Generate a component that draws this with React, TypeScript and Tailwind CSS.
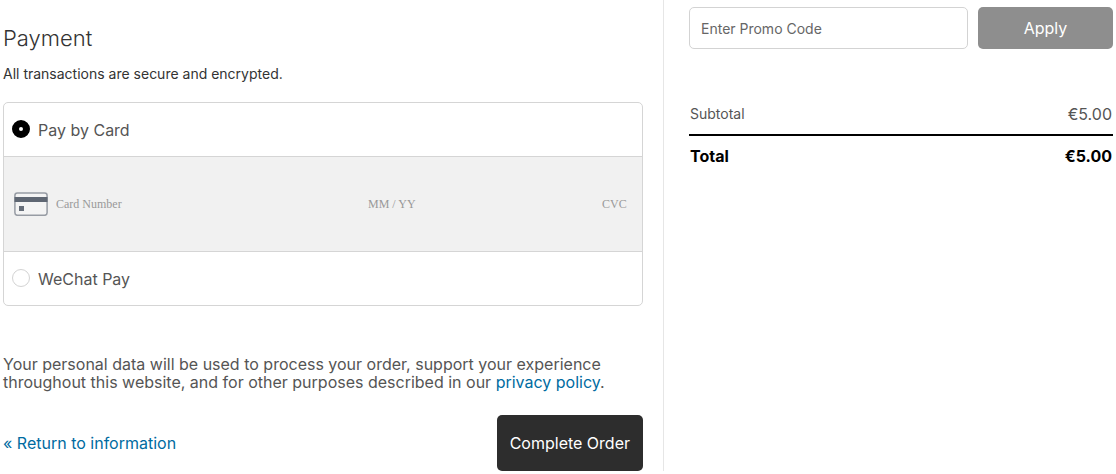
import { useState } from "react";

function CardIcon() {
  return (
    <svg width="34" height="24" viewBox="0 0 34 24" fill="none" aria-hidden="true" className="shrink-0">
      <rect x="0.9" y="1.1" width="32.2" height="22.2" rx="2.5" fill="#f4f4f4" stroke="#979ca4" strokeWidth="1.5" />
      <rect x="0.5" y="5" width="33" height="5" fill="#5f6773" />
      <rect x="5" y="14" width="5" height="5" fill="#666e79" />
    </svg>
  );
}

type OptionProps = {
  id: string;
  label: string;
  checked: boolean;
  onSelect: () => void;
};

function PaymentOption({ id, label, checked, onSelect }: OptionProps) {
  return (
    <div className="flex items-start gap-2 px-2 pt-[15px] pb-3.5">
      <input
        id={id}
        type="radio"
        name="payment-method"
        checked={checked}
        onChange={onSelect}
        className="mt-0.5 size-[18px] shrink-0 appearance-none rounded-full border border-[#d3d3d3] bg-white checked:border-[7px] checked:border-black"
      />
      <label htmlFor={id} className="text-base text-[#555]">
        {label}
      </label>
    </div>
  );
}

const cardInput =
  "min-w-0 bg-transparent font-['Liberation_Serif',serif] text-xs text-[#333] outline-none placeholder:text-[#999]";

export default function App() {
  const [method, setMethod] = useState("card");

  return (
    <div className="grid grid-cols-[664fr_452fr] bg-white font-['Inter',sans-serif] text-[#555]">
      <main className="border-r border-[#e6e6e6] pt-6 pr-5 pl-[3px]">
        <h2 className="text-[22px] leading-7 font-light text-[#333]">Payment</h2>
        <p className="mt-3 text-sm text-[#333]">All transactions are secure and encrypted.</p>

        <div className="mt-[18px] overflow-hidden rounded-[5px] border border-[#d5d5d5]">
          <PaymentOption id="pay-card" label="Pay by Card" checked={method === "card"} onSelect={() => setMethod("card")} />
          <div className="flex items-center border-y border-[#d5d5d5] bg-[#f1f1f1] py-[35px] pr-2 pl-2.5">
            <CardIcon />
            <input aria-label="Card Number" placeholder="Card Number" className={`${cardInput} ml-2 flex-1`} />
            <input aria-label="MM / YY" placeholder="MM / YY" className={`${cardInput} w-[234px]`} />
            <input aria-label="CVC" placeholder="CVC" className={`${cardInput} w-8`} />
          </div>
          <PaymentOption id="pay-wechat" label="WeChat Pay" checked={method === "wechat"} onSelect={() => setMethod("wechat")} />
        </div>

        <p className="mt-[49px] text-base leading-[18px]">
          Your personal data will be used to process your order, support your experience throughout this website, and for
          other purposes described in our{" "}
          <a href="#privacy" className="text-[#006ba1]">
            privacy policy
          </a>
          .
        </p>

        <div className="mt-6 flex items-center justify-between">
          <a href="#information" className="text-base text-[#006ba1]">
            « Return to information
          </a>
          <button type="button" className="rounded-[5px] bg-[#2d2d2d] px-[13px] py-4 text-base text-white">
            Complete Order
          </button>
        </div>
      </main>

      <aside className="pt-[7px] pr-[3px] pl-[25px]">
        <form className="flex gap-2.5" onSubmit={(event) => event.preventDefault()}>
          <input
            aria-label="Enter Promo Code"
            placeholder="Enter Promo Code"
            className="h-[42px] min-w-0 flex-1 rounded-[5px] border border-[#d3d3d3] px-[11px] text-sm outline-none placeholder:text-[#666]"
          />
          <button type="submit" className="w-[135px] rounded-[5px] bg-[#8e8e8e] text-base text-white">
            Apply
          </button>
        </form>

        <table className="mt-[49px] w-full border-collapse">
          <tbody>
            <tr className="border-b-2 border-black">
              <th scope="row" className="px-px pt-1 pb-2 text-left text-sm font-normal">
                Subtotal
              </th>
              <td className="px-px pt-1 pb-2 text-right text-base">€5.00</td>
            </tr>
            <tr className="text-base font-bold text-black">
              <th scope="row" className="px-px py-2 text-left">
                Total
              </th>
              <td className="px-px py-2 text-right">€5.00</td>
            </tr>
          </tbody>
        </table>
      </aside>
    </div>
  );
}
